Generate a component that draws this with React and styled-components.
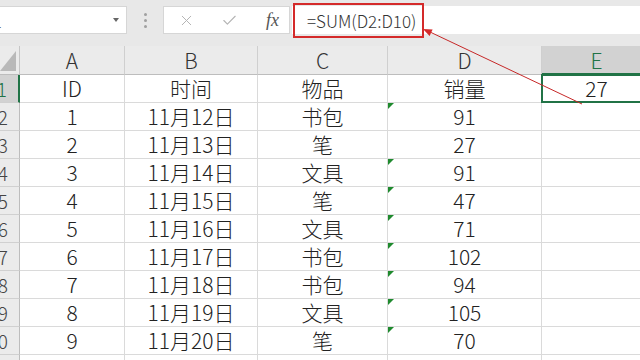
import React from 'react';
import styled, { createGlobalStyle } from 'styled-components';
import { X, Check } from 'lucide-react';

const FONT = '"Noto Sans CJK SC", "Liberation Sans", sans-serif';
const GRID = '#dadada';
const GREEN = '#217346';

const GlobalStyle = createGlobalStyle`
  body {
    margin: 0;
    overflow: hidden;
    background: #fff;
    font-family: ${FONT};
  }
`;

const Page = styled.div`
  position: relative;
  width: 640px;
  height: 360px;
  overflow: hidden;
  background: #fff;
`;

const Toolbar = styled.div`
  display: flex;
  align-items: flex-start;
  height: 46px;
  box-sizing: border-box;
  padding-top: 6px;
  background: #e8e8e8;
`;

const NameBox = styled.div`
  display: flex;
  align-items: center;
  justify-content: space-between;
  width: 151px;
  height: 28px;
  margin-left: -24px;
  box-sizing: border-box;
  padding: 0 7px 0 6px;
  background: #fff;
  border: 1px solid #d6d6d6;
  font-size: 17px;
  font-weight: 300;
  color: #333;
`;

const Caret = styled.span`
  width: 0;
  height: 0;
  border-left: 3px solid transparent;
  border-right: 3px solid transparent;
  border-top: 4px solid #666;
`;

const Dots = styled.div`
  display: flex;
  flex-direction: column;
  align-items: center;
  justify-content: center;
  gap: 3px;
  width: 36px;
  height: 28px;

  span {
    width: 3px;
    height: 3px;
    border-radius: 50%;
    background: #a0a0a0;
  }
`;

const FxBox = styled.div`
  display: flex;
  align-items: center;
  width: 127px;
  height: 28px;
  box-sizing: border-box;
  padding-left: 14px;
  gap: 26px;
  background: #fff;
  border: 1px solid #d6d6d6;
  color: #b4b4b4;
`;

const Fx = styled.span`
  font-family: "Liberation Serif", serif;
  font-style: italic;
  font-size: 18px;
  color: #555;
  margin-left: 2px;
`;

const FormulaInput = styled.div`
  flex: 1;
  height: 28px;
  margin-left: 2px;
  box-sizing: border-box;
  padding-left: 15px;
  display: flex;
  align-items: center;
  background: #fff;
  font-size: 17px;
  font-weight: 300;
  color: #333;
`;

const Sheet = styled.div`
  display: grid;
  grid-template-columns: 20px 105px 133px 130px 154px 110px;
  grid-template-rows: 29px;
  grid-auto-rows: 28px;
  width: 652px;
  font-size: 21px;
  font-weight: 300;
  color: #222;
`;

const Corner = styled.div`
  position: relative;
  background: #ebebeb;
  border-right: 1px solid #c6c6c6;
  border-bottom: 1px solid #bdbdbd;

  &::after {
    content: '';
    position: absolute;
    right: 3px;
    bottom: 3px;
    width: 16px;
    height: 20px;
    background: #b9b9b9;
    clip-path: polygon(100% 0, 100% 100%, 0 100%);
  }
`;

const ColHead = styled.div`
  display: flex;
  align-items: center;
  justify-content: center;
  box-sizing: border-box;
  background: ${(p) => (p.$active ? '#d2d2d2' : '#ebebeb')};
  color: ${(p) => (p.$active ? GREEN : '#333')};
  border-right: 1px solid #cfcfcf;
  border-bottom: ${(p) => (p.$active ? `2px solid ${GREEN}` : '1px solid #bdbdbd')};
`;

const RowHead = styled.div`
  display: flex;
  align-items: center;
  justify-content: flex-end;
  overflow: hidden;
  padding-right: 11px;
  background: ${(p) => (p.$active ? '#d2d2d2' : '#ebebeb')};
  color: ${(p) => (p.$active ? GREEN : '#444')};
  border-right: ${(p) => (p.$active ? `2px solid ${GREEN}` : '1px solid #bdbdbd')};
  border-bottom: 1px solid #d0d0d0;
  font-size: 19px;
`;

const Cell = styled.div`
  position: relative;
  display: flex;
  align-items: center;
  justify-content: center;
  border-right: 1px solid ${GRID};
  border-bottom: 1px solid ${GRID};
  line-height: 1;

  ${(p) =>
    p.$flag &&
    `
    &::before {
      content: '';
      position: absolute;
      top: 0;
      left: 0;
      border-top: 6px solid #1f8a2e;
      border-right: 6px solid transparent;
    }
  `}

  ${(p) =>
    p.$selected &&
    `
    &::after {
      content: '';
      position: absolute;
      inset: -1px 0 -1px -1px;
      border: 2px solid ${GREEN};
    }
  `}
`;

const Overlay = styled.svg`
  position: absolute;
  top: 0;
  left: 0;
  pointer-events: none;
`;

const rows = [
  ['ID', '时间', '物品', '销量'],
  ['1', '11月12日', '书包', '91'],
  ['2', '11月13日', '笔', '27'],
  ['3', '11月14日', '文具', '91'],
  ['4', '11月15日', '笔', '47'],
  ['5', '11月16日', '文具', '71'],
  ['6', '11月17日', '书包', '102'],
  ['7', '11月18日', '书包', '94'],
  ['8', '11月19日', '文具', '105'],
  ['9', '11月20日', '笔', '70'],
  ['', '', '', ''],
];

const columns = ['A', 'B', 'C', 'D', 'E'];

export default function App() {
  return (
    <Page>
      <GlobalStyle />
      <Toolbar>
        <NameBox>
          <span>E1</span>
          <Caret />
        </NameBox>
        <Dots>
          <span />
          <span />
          <span />
        </Dots>
        <FxBox>
          <X size={17} strokeWidth={1.4} />
          <Check size={17} strokeWidth={1.6} />
          <Fx>fx</Fx>
        </FxBox>
        <FormulaInput>=SUM(D2:D10)</FormulaInput>
      </Toolbar>

      <Sheet>
        <Corner />
        {columns.map((c) => (
          <ColHead key={c} $active={c === 'E'}>
            {c}
          </ColHead>
        ))}
        {rows.map((r, i) => (
          <React.Fragment key={i}>
            <RowHead $active={i === 0}>{i + 1}</RowHead>
            <Cell>{r[0]}</Cell>
            <Cell>{r[1]}</Cell>
            <Cell>{r[2]}</Cell>
            <Cell $flag={i > 0 && i < 10 && i !== 2}>{r[3]}</Cell>
            <Cell $selected={i === 0}>{i === 0 ? '27' : ''}</Cell>
          </React.Fragment>
        ))}
      </Sheet>

      <Overlay width="640" height="360" viewBox="0 0 640 360">
        <rect x="294" y="4" width="129" height="33" fill="none" stroke="#d42a2a" strokeWidth="2" />
        <line x1="582" y1="104" x2="430" y2="32" stroke="#c62828" strokeWidth="1" />
        <polygon points="423,29 432.6,29.6 429.6,36" fill="#d42a2a" />
      </Overlay>
    </Page>
  );
}
